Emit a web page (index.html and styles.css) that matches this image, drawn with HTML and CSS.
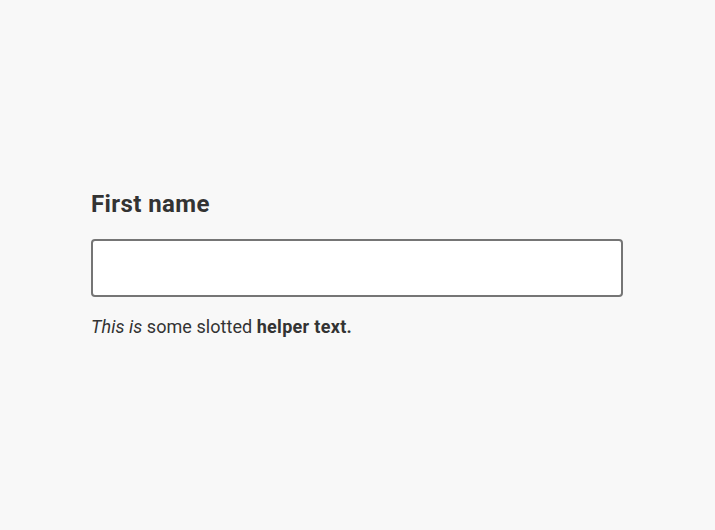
FILE: index.html
```html
<!DOCTYPE html>
<html>
<head>
<meta charset="utf-8">
<link rel="stylesheet" href="styles.css">
</head>
<body>
<div class="page">
  <div class="field">
    <label class="label" for="first">First name</label>
    <input class="input" id="first" type="text">
    <div class="helper"><em>This is</em> some slotted <strong>helper text.</strong></div>
  </div>
</div>
</body>
</html>
```
FILE: styles.css
```css
html, body {
  margin: 0;
  padding: 0;
  background: #f8f8f8;
}
.page {
  box-sizing: border-box;
  width: 715px;
  height: 530px;
  padding: 190px 0 0 91px;
  font-family: Roboto, "Liberation Sans", sans-serif;
  color: #333;
}
.field {
  width: 532px;
  display: flex;
  flex-direction: column;
}
.label {
  font-size: 24px;
  font-weight: 700;
  line-height: 28px;
  letter-spacing: 0.4px;
  margin-bottom: 21px;
}
.input {
  box-sizing: border-box;
  width: 532px;
  height: 58px;
  border: 2px solid #757575;
  border-radius: 4px;
  background: #fff;
  margin: 0;
}
.helper {
  margin-top: 18px;
  font-size: 18px;
  line-height: 24px;
  letter-spacing: 0.05px;
}
.helper strong {
  font-weight: 700;
  letter-spacing: 0.3px;
}
```
